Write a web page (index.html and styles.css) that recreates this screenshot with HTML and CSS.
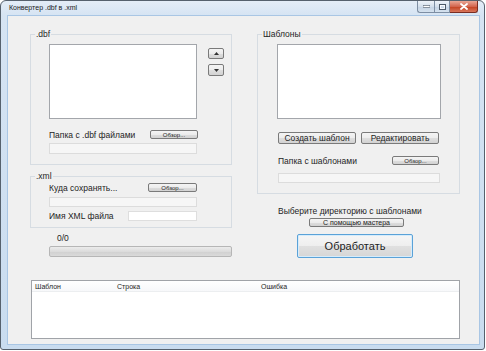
FILE: index.html
```html
<!DOCTYPE html>
<html lang="ru">
<head>
<meta charset="utf-8">
<title>Конвертер .dbf в .xml</title>
<link rel="stylesheet" href="styles.css">
</head>
<body>
<div class="window">
  <div class="titlebar">
    <span class="title">Конвертер .dbf в .xml</span>
    <div class="caption">
      <div class="cbtn cbtn-min"><svg width="7" height="3" viewBox="0 0 7 3"><rect x="0" y="0.5" width="7" height="2" fill="#fff" stroke="#4c5968" stroke-width="0.6"/></svg></div>
      <div class="cbtn cbtn-max"><svg width="7" height="6" viewBox="0 0 7 6"><rect x="0.5" y="0.5" width="6" height="5" fill="none" stroke="#4c5968" stroke-width="1"/><rect x="1.5" y="1.5" width="4" height="3" fill="none" stroke="#fff" stroke-width="0.8"/></svg></div>
      <div class="cbtn cbtn-close"><svg width="8" height="7" viewBox="0 0 8 7"><path d="M1 1 L7 6 M7 1 L1 6" stroke="#fff" stroke-width="1.8" stroke-linecap="round"/></svg></div>
    </div>
  </div>
  <div class="client">
    <div class="panes">
      <div class="col col-left">
        <fieldset class="group group-dbf">
          <legend>.dbf</legend>
          <div class="group-body">
            <div class="row-list">
              <div class="listbox listbox-dbf"></div>
              <div class="updown">
                <button class="btn arrow-btn"><svg width="5" height="3" viewBox="0 0 5 3"><path d="M0 3 L2.5 0 L5 3 Z" fill="#333"/></svg></button>
                <button class="btn arrow-btn arrow-down"><svg width="5" height="3" viewBox="0 0 5 3"><path d="M0 0 L2.5 3 L5 0 Z" fill="#333"/></svg></button>
              </div>
            </div>
            <div class="row-browse row-dbf">
              <span class="label">Папка с .dbf файлами</span>
              <button class="btn btn-tiny btn-browse-dbf">Обзор...</button>
            </div>
            <div class="textbox textbox-disabled tb-dbf"></div>
          </div>
        </fieldset>
        <fieldset class="group group-xml">
          <legend>.xml</legend>
          <div class="group-body">
            <div class="row-browse row-xml">
              <span class="label">Куда сохранять...</span>
              <button class="btn btn-tiny btn-browse-xml">Обзор...</button>
            </div>
            <div class="textbox textbox-disabled tb-xml"></div>
            <div class="row-browse row-name">
              <span class="label">Имя XML файла</span>
              <div class="textbox tb-name"></div>
            </div>
          </div>
        </fieldset>
        <div class="counter">0/0</div>
        <div class="progress"></div>
      </div>
      <div class="col col-right">
        <fieldset class="group group-tpl">
          <legend>Шаблоны</legend>
          <div class="group-body">
            <div class="listbox listbox-tpl"></div>
            <div class="tpl-buttons">
              <button class="btn btn-mid">Создать шаблон</button>
              <button class="btn btn-mid">Редактировать</button>
            </div>
            <div class="row-browse row-tpl">
              <span class="label">Папка с шаблонами</span>
              <button class="btn btn-tiny btn-browse-tpl">Обзор...</button>
            </div>
            <div class="textbox textbox-disabled tb-tpl"></div>
          </div>
        </fieldset>
        <div class="label choose-label">Выберите директорию с шаблонами</div>
        <button class="btn btn-master">С помощью мастера</button>
        <button class="btn btn-primary">Обработать</button>
      </div>
    </div>
    <div class="listview">
      <div class="lv-header">
        <span>Шаблон</span>
        <span>Строка</span>
        <span>Ошибка</span>
      </div>
      <div class="lv-body"></div>
    </div>
  </div>
</div>
</body>
</html>
```
FILE: styles.css
```css
* { box-sizing: border-box; }
html, body { margin: 0; padding: 0; }
body {
  width: 486px;
  height: 351px;
  background: #ffffff;
  font-family: "Liberation Sans", Arial, sans-serif;
  color: #1e1e1e;
  overflow: hidden;
}

.window {
  width: 485px;
  height: 350px;
  border: 1px solid #56616d;
  border-radius: 6px 6px 3px 3px;
  background: linear-gradient(to bottom, #e4edf7 0px, #d6e4f3 14px, #c9dcef 100%);
  display: flex;
  flex-direction: column;
}

.titlebar {
  height: 14px;
  display: flex;
  align-items: flex-start;
  padding-left: 8px;
}
.title {
  font-size: 7px;
  line-height: 14px;
  color: #1a1a1a;
}
.caption {
  margin-left: auto;
  margin-right: 6px;
  display: flex;
  height: 12px;
}
.cbtn {
  height: 12px;
  display: flex;
  align-items: center;
  justify-content: center;
  border: 1px solid #7d8ea3;
  border-top: none;
  background: linear-gradient(to bottom, #eef3f9, #d3dfec 50%, #c4d3e4 51%, #d4e1ee);
}
.cbtn-min { width: 17px; border-radius: 0 0 0 3px; border-right: none; }
.cbtn-max { width: 16px; }
.cbtn-close {
  width: 28px;
  border-radius: 0 0 3px 0;
  border-left: none;
  border-color: #7a2d22;
  background: linear-gradient(to bottom, #eaa796, #d3654e 50%, #c3401f 51%, #d8765c);
}

.client {
  flex: 1;
  margin: 0 4px 4px 6px;
  border: 1px solid #a9c6e4;
  background: #f0f0f0;
  display: flex;
  flex-direction: column;
}

.panes {
  display: flex;
  padding-left: 22px;
  gap: 25px;
}
.col { display: flex; flex-direction: column; align-items: flex-start; }
.col-left { width: 202px; }
.col-right { width: 203px; }

.group {
  margin: 0;
  padding: 0 0 0 4px;
  border: 1px solid #d6dce2;
  width: 100%;
  min-width: 0;
}
.group legend {
  padding: 0 1px;
  font-size: 8.5px;
  line-height: 10px;
  color: #1e1e1e;
}
.group-body {
  margin-left: 14px;
  display: flex;
  flex-direction: column;
  align-items: flex-start;
}

.label {
  font-size: 8.5px;
  line-height: 10px;
  white-space: nowrap;
}

.btn {
  margin: 0;
  padding: 0;
  border: 1px solid #7a7a7a;
  border-radius: 2px;
  background: linear-gradient(to bottom, #f4f4f4 0%, #ececec 50%, #dedede 51%, #d2d2d2 100%);
  font-family: "Liberation Sans", Arial, sans-serif;
  color: #1e1e1e;
  display: flex;
  align-items: center;
  justify-content: center;
  line-height: 1;
  white-space: nowrap;
}

.listbox {
  border: 1px solid #a3a6ab;
  background: #ffffff;
}
.textbox {
  border: 1px solid #dedede;
  background: #ffffff;
}
.textbox-disabled {
  background: #f6f6f6;
  border-color: #dcdcdc;
}

/* .dbf group */
.group-dbf { margin-top: 13px; padding-bottom: 10px; }
.row-list { display: flex; margin-top: 5px; }
.listbox-dbf { width: 148px; height: 75px; }
.updown {
  margin-left: 11px;
  margin-top: 4px;
  display: flex;
  flex-direction: column;
  gap: 5px;
}
.arrow-btn { width: 16px; height: 11px; }
.arrow-down { height: 12px; }

.row-browse {
  display: flex;
  align-items: center;
  justify-content: space-between;
}
.row-dbf { width: 149px; height: 9px; margin-top: 11px; }
.btn-tiny { font-size: 6px; height: 9px; }
.btn-browse-dbf { width: 48px; }
.tb-dbf { width: 148px; height: 11px; margin-top: 4px; }

/* .xml group */
.group-xml { margin-top: 6px; padding-bottom: 6px; }
.row-xml { width: 148px; height: 9px; margin-top: 2px; }
.btn-browse-xml { width: 49px; }
.tb-xml { width: 148px; height: 10px; margin-top: 5px; }
.row-name { width: 148px; height: 10px; margin-top: 4px; }
.tb-name { width: 69px; height: 10px; }

.counter {
  margin-top: 5px;
  margin-left: 27px;
  font-size: 8.5px;
  line-height: 10px;
}
.progress {
  margin-top: 3px;
  margin-left: 19px;
  width: 183px;
  height: 11px;
  border: 1px solid #b6b6b6;
  border-radius: 2px;
  background: linear-gradient(to bottom, #ececec, #dcdcdc 50%, #d0d0d0 51%, #dadada);
}

/* templates group */
.group-tpl { margin-top: 13px; padding-bottom: 10px; }
.listbox-tpl { width: 164px; height: 75px; margin-top: 5px; margin-left: 1px; }
.tpl-buttons { display: flex; gap: 5px; margin-top: 13px; margin-left: 2px; }
.btn-mid { width: 78px; height: 12px; font-size: 8.5px; }
.row-tpl { width: 161px; height: 9px; margin-top: 12px; margin-left: 2px; }
.btn-browse-tpl { width: 47px; }
.tb-tpl { width: 162px; height: 10px; margin-top: 8px; margin-left: 2px; }

.choose-label { margin-top: 12px; margin-left: 21px; }
.btn-master {
  margin-top: 2px;
  margin-left: 52px;
  width: 95px;
  height: 9px;
  font-size: 7px;
}
.btn-primary {
  margin-top: 7px;
  margin-left: 40px;
  width: 116px;
  height: 24px;
  font-size: 11px;
  border-color: #5aa2d8;
  box-shadow: inset 0 0 0 1px #d6ecfb;
  background: linear-gradient(to bottom, #f6f6f6 0%, #eeeeee 50%, #e0e0e0 51%, #d6d6d6 100%);
}

/* list view */
.listview {
  margin: auto 0 5px 23px;
  width: 429px;
  height: 59px;
  border: 1px solid #a0a3a8;
  background: #ffffff;
  display: flex;
  flex-direction: column;
}
.lv-header {
  height: 11px;
  display: grid;
  grid-template-columns: 82px 144px 1fr;
  align-items: center;
  padding-left: 3px;
  font-size: 7px;
  border-bottom: 1px solid #eceef0;
  background: linear-gradient(to bottom, #ffffff, #f7f8fa);
}
.lv-body { flex: 1; }
```
